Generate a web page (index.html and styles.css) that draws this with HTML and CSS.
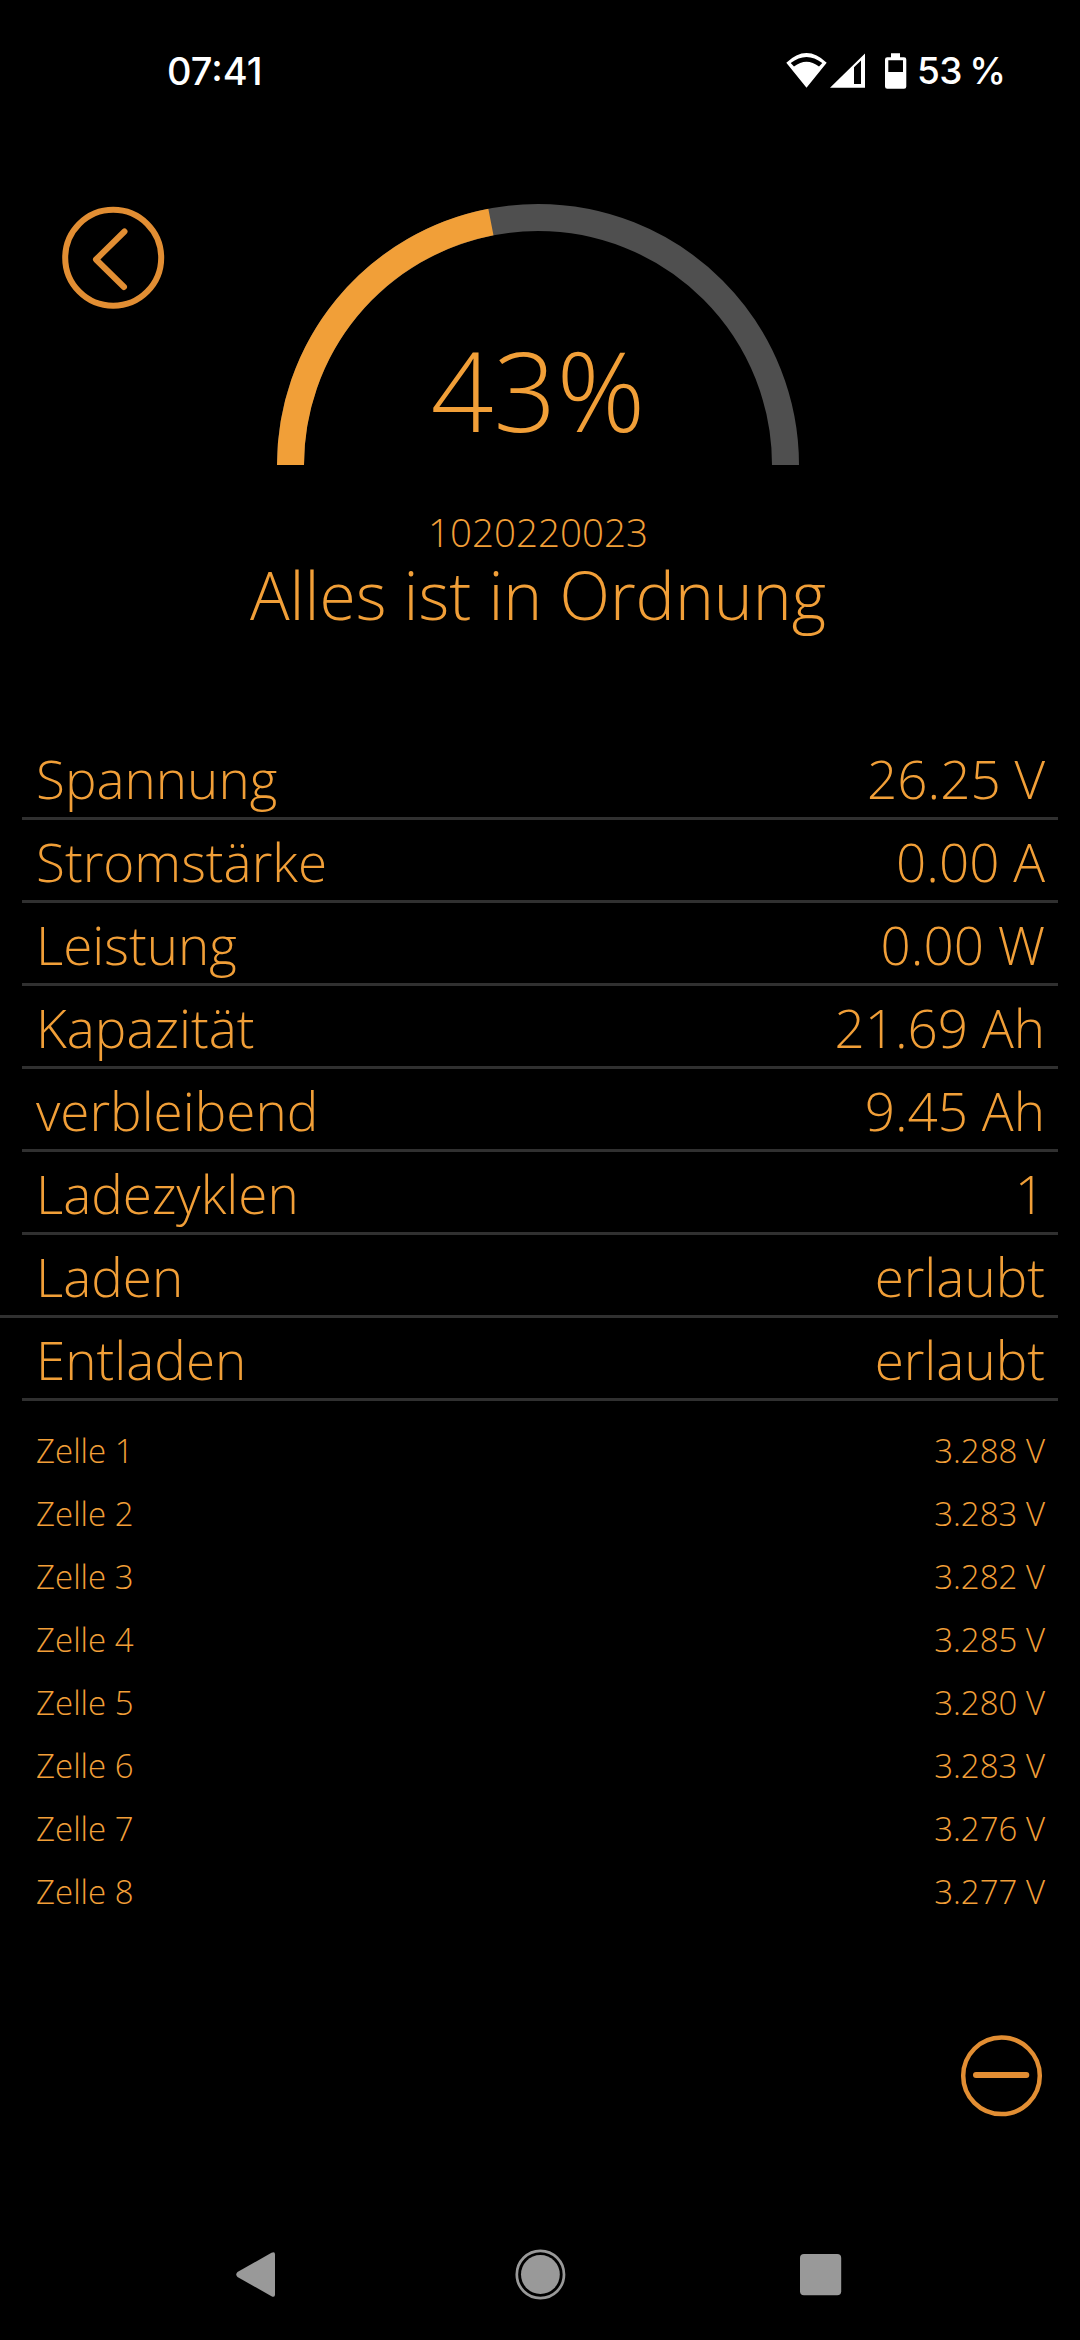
FILE: index.html
```html
<!DOCTYPE html>
<html lang="de"><head><meta charset="utf-8"><title>Batterie</title><link rel="stylesheet" href="styles.css"></head>
<body>
<header class="status"><span class="clock">07:41</span>
<svg class="status-icons" width="126" height="36" viewBox="0 0 126 36" fill="#fff" fill-rule="evenodd"><path d="M.3 9.700Q20.500-9.700 40.700 9.700L20.500 34.800ZM4.700 10L8 13.500Q20.500 4 33 13.500L36.300 10Q20.500-2 4.700 10Z"/><path d="M44 34.700L79 .5V34.700ZM68 14.300V31H75V7.500Z"/><path d="M105 .3H114V4.300H118Q120.300 4.300 120.300 6.500V33.500Q120.300 35.700 118 35.700H101.300Q99 35.700 99 33.500V6.500Q99 4.300 101.300 4.300H105ZM102.300 7.300V19H117V7.300Z"/></svg>
<span class="percent">53 %</span></header>
<section class="hero">
<button class="back" aria-label="Zurück"><svg width="104" height="104" viewBox="0 0 104 104" fill="none" stroke="#e28e33" stroke-width="6"><circle cx="52.200" cy="51.800" r="48"/><path d="M63.500 25.500L35 53.500L63 81" stroke-linecap="round" stroke-linejoin="round"/></svg></button>
<div class="gauge"><svg width="522" height="261" viewBox="0 0 522 261" fill="none" stroke-width="27"><path stroke="#4f4f4f" d="M13.500 261A247.500 247.500 0 0 1 508.500 261"/><path stroke="#f19f38" pathLength="100" stroke-dasharray="43.900 100" d="M13.500 261A247.500 247.500 0 0 1 508.500 261"/></svg><span class="charge">43%</span></div>
<div class="serial">1020220023</div><h1 class="message">Alles ist in Ordnung</h1>
</section>
<main class="values">
<div class="row"><span>Spannung</span><span>26.25 V</span></div>
<div class="row"><span>Stromstärke</span><span>0.00 A</span></div>
<div class="row"><span>Leistung</span><span>0.00 W</span></div>
<div class="row"><span>Kapazität</span><span>21.69 Ah</span></div>
<div class="row"><span>verbleibend</span><span>9.45 Ah</span></div>
<div class="row"><span>Ladezyklen</span><span>1</span></div>
<div class="row wide"><span>Laden</span><span>erlaubt</span></div>
<div class="row"><span>Entladen</span><span>erlaubt</span></div>
</main>
<section class="cells">
<div class="cell"><span>Zelle 1</span><span>3.288 V</span></div>
<div class="cell"><span>Zelle 2</span><span>3.283 V</span></div>
<div class="cell"><span>Zelle 3</span><span>3.282 V</span></div>
<div class="cell"><span>Zelle 4</span><span>3.285 V</span></div>
<div class="cell"><span>Zelle 5</span><span>3.280 V</span></div>
<div class="cell"><span>Zelle 6</span><span>3.283 V</span></div>
<div class="cell"><span>Zelle 7</span><span>3.276 V</span></div>
<div class="cell"><span>Zelle 8</span><span>3.277 V</span></div>
</section>
<div class="actions"><svg width="84" height="84" viewBox="0 0 84 84" fill="none" stroke="#e28e33"><circle cx="41.500" cy="41.800" r="38.300" stroke-width="4.500"/><path d="M16 41H66.300" stroke-width="6" stroke-linecap="round"/></svg></div>
<nav class="nav"><svg width="1080" height="60" viewBox="0 0 1080 60" fill="#999"><path d="M237.500 28L271.500 8.800Q275 7 275 10.500V50.500Q275 54 271.500 52.200L237.500 33Q235 30.500 237.500 28Z"/><circle cx="540.400" cy="30.500" r="19.400"/><circle cx="540.400" cy="30.500" r="23.600" fill="none" stroke="#999" stroke-width="2.700"/><rect x="800" y="10" width="41.200" height="41.300" rx="4"/></svg></nav>
</body></html>
```
FILE: styles.css
```css
* { box-sizing: border-box; }
body { margin: 0; width: 1080px; height: 2340px; background: #000; color: #f19f38; font-family: "Open Sans", sans-serif; font-weight: 300; display: flex; flex-direction: column; overflow: hidden; }
.status { height: 142px; padding-left: 167px; display: flex; align-items: center; color: #fff; font: 500 38px/1 Inter, sans-serif; }
.clock { width: 619px; padding-bottom: 1px; }
.percent { margin-left: 5px; padding-bottom: 2px; font-size: 37px; letter-spacing: -.6px; word-spacing: -2px; }
.hero { height: 595px; position: relative; display: flex; flex-direction: column; align-items: center; padding: 62px 4px 0 0; }
.back { position: absolute; left: 61px; top: 64px; padding: 0; border: 0; background: none; }
.back svg, .gauge svg { display: block; }
.gauge { position: relative; height: 261px; }
.charge { position: absolute; left: 0; right: 0; top: 110px; text-align: center; font-size: 110px; line-height: 150px; }
.serial { margin-top: 43px; font-size: 38.5px; line-height: 48px; }
.message { margin: 0; font-size: 66px; line-height: 76px; font-weight: 300; }
.values { padding: 0 22px; }
.row { height: 83px; padding: 4px 13px 0 14px; border-bottom: 3px solid #303030; display: flex; justify-content: space-between; align-items: center; font-size: 53px; line-height: 72px; }
.wide { margin-left: -22px; padding-left: 36px; }
.cells { padding: 18px 35px 0 36px; height: 633px; }
.cell { height: 63px; display: flex; justify-content: space-between; align-items: center; font-size: 33px; }
.actions { height: 210px; padding-right: 36px; display: flex; justify-content: flex-end; }
.nav { height: 60px; }
```
